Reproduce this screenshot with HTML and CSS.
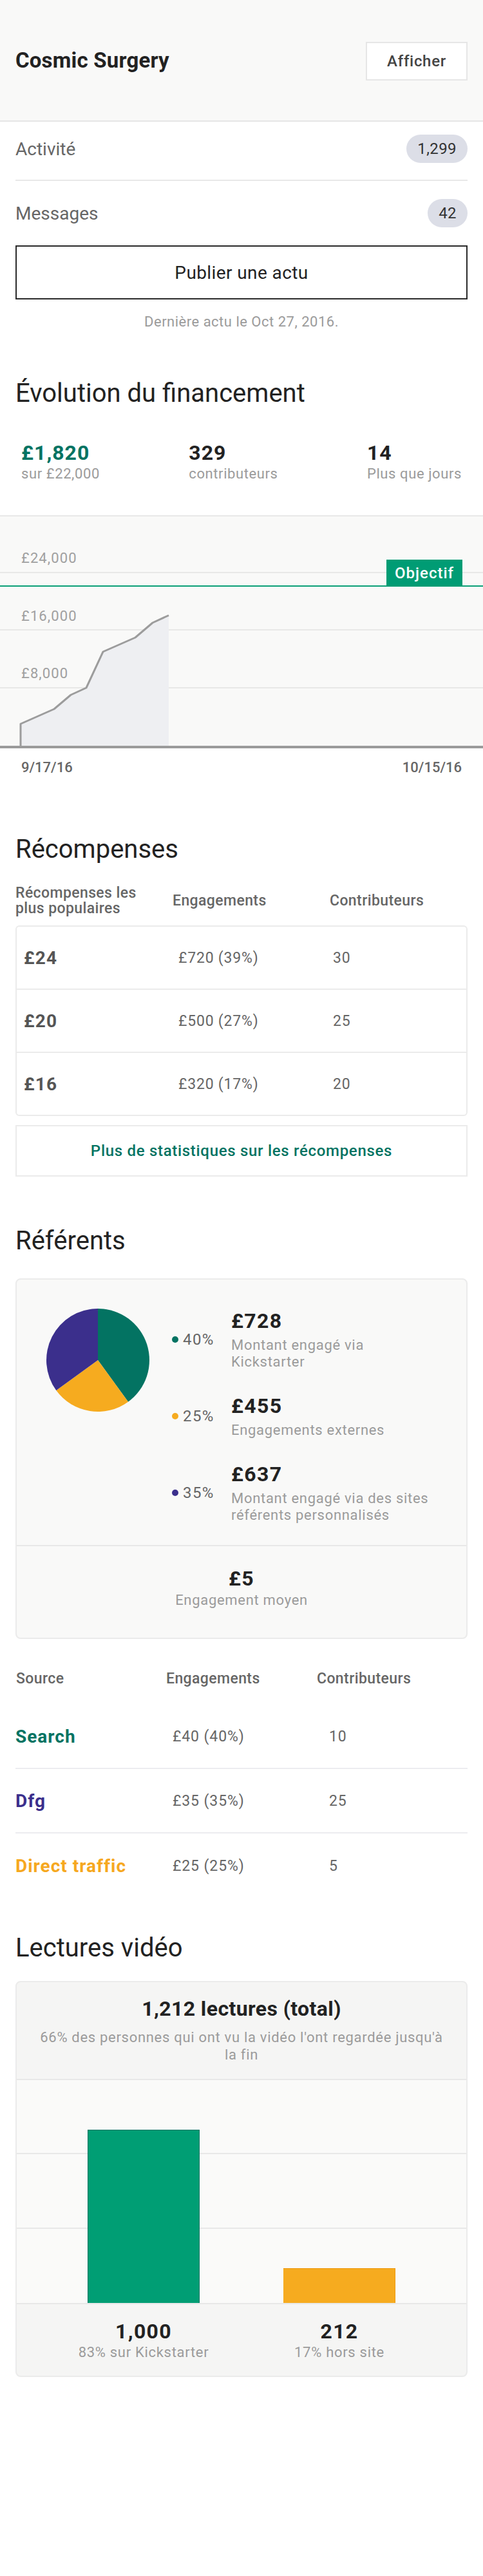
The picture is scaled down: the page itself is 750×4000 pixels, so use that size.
FILE: index.html
```html
<!DOCTYPE html>
<html lang="fr">
<head>
<meta charset="utf-8">
<title>Cosmic Surgery</title>
<link rel="stylesheet" href="styles.css">
</head>
<body>
<header class="top">
  <h1 class="top-title">Cosmic Surgery</h1>
  <button class="btn-view">Afficher</button>
</header>

<section class="pad">
  <div class="stat-row first">
    <span class="stat-label">Activité</span>
    <span class="badge">1,299</span>
  </div>
  <div class="stat-row second">
    <span class="stat-label">Messages</span>
    <span class="badge">42</span>
  </div>
  <button class="btn-publish">Publier une actu</button>
  <p class="last-update">Dernière actu le Oct 27, 2016.</p>
</section>

<section>
  <h2 class="section-title pad title-funding">Évolution du financement</h2>
  <div class="funding-stats">
    <div class="fstat">
      <div class="fstat-value green">£1,820</div>
      <div class="fstat-label">sur £22,000</div>
    </div>
    <div class="fstat">
      <div class="fstat-value">329</div>
      <div class="fstat-label">contributeurs</div>
    </div>
    <div class="fstat">
      <div class="fstat-value">14</div>
      <div class="fstat-label">Plus que jours</div>
    </div>
  </div>
  <svg class="funding-chart" viewBox="0 0 750 362" width="750" height="362">
    <rect x="0" y="0" width="750" height="360" fill="#f9f9f8"/>
    <rect x="0" y="0" width="750" height="2" fill="#e8e8e8"/>
    <rect x="0" y="88" width="750" height="2" fill="#e8e8e7"/>
    <rect x="0" y="177" width="750" height="2" fill="#e8e8e7"/>
    <rect x="0" y="267" width="750" height="2" fill="#e8e8e7"/>
    <text x="33" y="74" class="axis">£24,000</text>
    <text x="33" y="164" class="axis">£16,000</text>
    <text x="33" y="253" class="axis">£8,000</text>
    <polygon points="32,360 32,324 84,301 110,279 134,268 160,212 210,190 237,167 262,155.5 262,360" fill="#eeeff2"/>
    <polyline points="32,360 32,324 84,301 110,279 134,268 160,212 210,190 237,167 262,155.5" fill="none" stroke="#9c9c9c" stroke-width="3" stroke-linejoin="round"/>
    <rect x="0" y="109" width="750" height="2" fill="#0a9f77"/>
    <rect x="600" y="69" width="118" height="41" fill="#009c74"/>
    <text x="659" y="98" class="goal">Objectif</text>
    <rect x="0" y="358" width="750" height="4" fill="#9b9b9b"/>
  </svg>
  <div class="chart-dates">
    <span>9/17/16</span>
    <span>10/15/16</span>
  </div>
</section>

<section class="pad">
  <h2 class="section-title title-rewards">Récompenses</h2>
  <div class="rewards-head">
    <span>Récompenses les<br>plus populaires</span>
    <span>Engagements</span>
    <span>Contributeurs</span>
  </div>
  <div class="rewards-card">
    <div class="reward-row">
      <span class="reward-amount">£24</span>
      <span class="reward-val">£720 (39%)</span>
      <span class="reward-val">30</span>
    </div>
    <div class="reward-row">
      <span class="reward-amount">£20</span>
      <span class="reward-val">£500 (27%)</span>
      <span class="reward-val">25</span>
    </div>
    <div class="reward-row">
      <span class="reward-amount">£16</span>
      <span class="reward-val">£320 (17%)</span>
      <span class="reward-val">20</span>
    </div>
  </div>
  <button class="btn-more">Plus de statistiques sur les récompenses</button>
</section>

<section class="pad">
  <h2 class="section-title title-ref">Référents</h2>
  <div class="ref-card">
    <div class="ref-top">
      <svg class="pie" viewBox="0 0 160 160" width="160" height="160">
        <path d="M80 80 L80 0 A80 80 0 0 1 127.02 144.72 Z" fill="#037362"/>
        <path d="M80 80 L127.02 144.72 A80 80 0 0 1 15.28 127.02 Z" fill="#f6ab1f"/>
        <path d="M80 80 L15.28 127.02 A80 80 0 0 1 80 0 Z" fill="#3b2f8c"/>
      </svg>
      <div class="legend">
        <div class="legend-item">
          <div class="legend-pct"><span class="dot dot-green"></span>40%</div>
          <div class="legend-info">
            <div class="legend-amount">£728</div>
            <div class="legend-desc">Montant engagé via<br>Kickstarter</div>
          </div>
        </div>
        <div class="legend-item">
          <div class="legend-pct"><span class="dot dot-yellow"></span>25%</div>
          <div class="legend-info">
            <div class="legend-amount">£455</div>
            <div class="legend-desc">Engagements externes</div>
          </div>
        </div>
        <div class="legend-item">
          <div class="legend-pct"><span class="dot dot-purple"></span>35%</div>
          <div class="legend-info">
            <div class="legend-amount">£637</div>
            <div class="legend-desc">Montant engagé via des sites<br>référents personnalisés</div>
          </div>
        </div>
      </div>
    </div>
    <div class="ref-bottom">
      <div class="legend-amount">£5</div>
      <div class="avg-label">Engagement moyen</div>
    </div>
  </div>

  <div class="source-head">
    <span>Source</span>
    <span>Engagements</span>
    <span>Contributeurs</span>
  </div>
  <div class="source-row">
    <span class="source-name green">Search</span>
    <span class="source-val">£40 (40%)</span>
    <span class="source-val num">10</span>
  </div>
  <div class="source-row">
    <span class="source-name purple">Dfg</span>
    <span class="source-val">£35 (35%)</span>
    <span class="source-val num">25</span>
  </div>
  <div class="source-row last">
    <span class="source-name yellow">Direct traffic</span>
    <span class="source-val">£25 (25%)</span>
    <span class="source-val num">5</span>
  </div>
</section>

<section class="pad">
  <h2 class="section-title title-video">Lectures vidéo</h2>
  <div class="video-card">
    <div class="video-head">
      <div class="video-total">1,212 lectures (total)</div>
      <div class="video-sub">66% des personnes qui ont vu la vidéo l'ont regardée jusqu'à la fin</div>
    </div>
    <div class="video-chart">
      <div class="bar-col"><div class="bar bar-green" style="height:269px"></div></div>
      <div class="bar-col"><div class="bar bar-yellow" style="height:54px"></div></div>
    </div>
    <div class="video-foot">
      <div class="foot-col">
        <div class="legend-amount">1,000</div>
        <div class="foot-label">83% sur Kickstarter</div>
      </div>
      <div class="foot-col">
        <div class="legend-amount">212</div>
        <div class="foot-label">17% hors site</div>
      </div>
    </div>
  </div>
</section>
</body>
</html>
```

FILE: styles.css
```css
* { box-sizing: border-box; }
html, body { margin: 0; padding: 0; background: #fff; }
body {
  font-family: Roboto, "Liberation Sans", sans-serif;
  color: #222;
  width: 750px;
}
button { font-family: inherit; cursor: pointer; }
.pad { padding: 0 24px; }
.green { color: #037362; }
.purple { color: #3b2f8c; }
.yellow { color: #f6a81f; }

/* Header */
.top {
  height: 189px;
  background: #f9f9f8;
  border-bottom: 2px solid #e6e6e6;
  display: flex;
  align-items: center;
  justify-content: space-between;
  padding: 0 24px;
}
.top-title {
  margin: 0;
  font-size: 33px;
  font-weight: 700;
  color: #222;
  letter-spacing: 0.2px;
}
.btn-view {
  width: 158px;
  height: 60px;
  background: #fff;
  border: 2px solid #e6e6e6;
  font-size: 24px;
  font-weight: 500;
  color: #444;
  letter-spacing: 0.7px;
  margin-top: 2px;
}

/* Activity rows */
.stat-row {
  display: flex;
  align-items: center;
  justify-content: space-between;
}
.stat-row.first { padding: 20px 0 26px; border-bottom: 2px solid #e8e8e8; }
.stat-row.second { padding-top: 28px; }
.stat-label { font-size: 28px; color: #666; }
.badge {
  height: 44px;
  line-height: 44px;
  padding: 0 17px;
  border-radius: 22px;
  background: #dcdee7;
  color: #333;
  font-size: 24px;
  letter-spacing: 0.4px;
}
.btn-publish {
  display: block;
  width: 100%;
  height: 84px;
  margin-top: 28px;
  background: #fff;
  border: 2px solid #2a2a2a;
  font-size: 28px;
  letter-spacing: 0.4px;
  color: #222;
}
.last-update {
  margin: 22px 0 0;
  text-align: center;
  font-size: 22px;
  line-height: 26px;
  color: #9b9b9b;
  letter-spacing: 0.5px;
}

/* Section titles */
.section-title {
  margin: 0;
  font-size: 40px;
  line-height: 48px;
  font-weight: 400;
  color: #222;
}
.title-funding { margin-top: 74px; }
.title-rewards { margin-top: 89px; }
.title-ref { margin-top: 76px; }
.title-video { margin-top: 54px; }

/* Funding */
.funding-stats {
  margin-top: 49px;
  padding: 0 33px;
  display: flex;
  justify-content: space-between;
}
.fstat-value {
  font-size: 32px;
  line-height: 38px;
  font-weight: 700;
  color: #222;
  letter-spacing: 1px;
}
.fstat-value.green { color: #037362; }
.fstat-label {
  font-size: 22px;
  line-height: 28px;
  color: #9b9b9b;
  letter-spacing: 0.6px;
}
.funding-chart {
  display: block;
  margin-top: 50px;
}
.funding-chart .axis {
  font-family: Roboto, "Liberation Sans", sans-serif;
  font-size: 22px;
  fill: #a0a0a0;
  letter-spacing: 1.1px;
}
.funding-chart .goal {
  font-family: Roboto, "Liberation Sans", sans-serif;
  font-size: 24px;
  font-weight: 500;
  fill: #fff;
  text-anchor: middle;
  letter-spacing: 1px;
}
.chart-dates {
  margin-top: 16px;
  padding: 0 33px;
  display: flex;
  justify-content: space-between;
  font-size: 22px;
  line-height: 28px;
  font-weight: 500;
  color: #666;
}

/* Rewards */
.rewards-head {
  margin-top: 32px;
  display: grid;
  grid-template-columns: 244px 244px 1fr;
  align-items: center;
  font-size: 23px;
  line-height: 24px;
  font-weight: 500;
  color: #666;
  letter-spacing: 0.4px;
}
.rewards-card {
  margin-top: 14px;
  border: 2px solid #ebebeb;
  border-radius: 6px;
}
.reward-row {
  height: 98px;
  padding-left: 11px;
  display: grid;
  grid-template-columns: 240px 240px 1fr;
  align-items: center;
  border-bottom: 2px solid #ebebeb;
}
.reward-row:last-child { height: 96px; border-bottom: none; }
.reward-amount {
  font-size: 28px;
  font-weight: 700;
  color: #555;
  letter-spacing: 1.2px;
}
.reward-val {
  font-size: 23px;
  color: #666;
  letter-spacing: 0.8px;
}
.btn-more {
  display: block;
  width: 100%;
  height: 80px;
  margin-top: 14px;
  background: #fff;
  border: 2px solid #ebebeb;
  font-size: 24px;
  font-weight: 500;
  color: #037362;
  letter-spacing: 0.7px;
}

/* Referrers */
.ref-card {
  margin-top: 34px;
  background: #f9f9f8;
  border: 2px solid #ebebeb;
  border-radius: 8px;
}
.ref-top {
  display: flex;
  align-items: flex-start;
  padding: 45px 20px 33px 46px;
  border-bottom: 2px solid #e8e8e8;
}
.pie { display: block; flex: none; }
.legend {
  margin-left: 35px;
  display: flex;
  flex-direction: column;
  gap: 36px;
}
.legend-item {
  display: flex;
  align-items: center;
}
.legend-pct {
  width: 92px;
  flex: none;
  display: flex;
  align-items: center;
  font-size: 24px;
  color: #666;
  letter-spacing: 1.4px;
}
.dot {
  width: 10px;
  height: 10px;
  border-radius: 50%;
  margin-right: 7px;
}
.dot-green { background: #037362; }
.dot-yellow { background: #f6ab1f; }
.dot-purple { background: #3b2f8c; }
.legend-amount {
  font-size: 32px;
  line-height: 38px;
  font-weight: 700;
  color: #222;
  letter-spacing: 1.3px;
}
.legend-desc {
  margin-top: 6px;
  font-size: 22px;
  line-height: 26px;
  color: #9b9b9b;
  letter-spacing: 0.7px;
}
.ref-bottom {
  padding: 31px 0 45px;
  text-align: center;
}
.avg-label {
  margin-top: 2px;
  font-size: 22px;
  line-height: 26px;
  color: #9b9b9b;
  letter-spacing: 0.7px;
}

/* Sources */
.source-head {
  margin-top: 49px;
  display: grid;
  grid-template-columns: 234px 234px 1fr;
  font-size: 23px;
  line-height: 26px;
  font-weight: 500;
  color: #666;
  letter-spacing: 0.4px;
}
.source-head span:first-child { padding-left: 1px; }
.source-row {
  height: 100px;
  display: grid;
  grid-template-columns: 244px 243px 1fr;
  align-items: center;
  border-bottom: 2px solid #ececf0;
}
.source-head + .source-row { margin-top: 27px; }
.source-row.last { height: 100px; border-bottom: none; }
.source-name {
  font-size: 28px;
  font-weight: 700;
  letter-spacing: 1px;
}
.source-val {
  font-size: 23px;
  color: #666;
  letter-spacing: 0.9px;
}

/* Video */
.video-card {
  margin-top: 27px;
  border: 2px solid #ebebeb;
  border-radius: 8px;
  background: #f5f5f4;
  overflow: hidden;
}
.video-head {
  padding: 22px 28px 24px;
  text-align: center;
  border-bottom: 2px solid #e8e8e8;
}
.video-total {
  font-size: 32px;
  line-height: 38px;
  font-weight: 700;
  color: #222;
  letter-spacing: 0.4px;
}
.video-sub {
  margin-top: 12px;
  font-size: 22px;
  line-height: 27px;
  color: #9b9b9b;
  letter-spacing: 0.7px;
}
.video-chart {
  height: 348px;
  padding: 0 45px;
  display: flex;
  align-items: flex-end;
  background-color: #fafaf9;
  background-image:
    linear-gradient(#e8e8e8, #e8e8e8),
    linear-gradient(#e8e8e8, #e8e8e8);
  background-size: 100% 2px, 100% 2px;
  background-position: 0 113px, 0 229px;
  background-repeat: no-repeat;
  border-bottom: 2px solid #e8e8e8;
}
.bar-col {
  flex: 1;
  display: flex;
  justify-content: center;
  align-items: flex-end;
}
.bar { width: 174px; }
.bar-green { background: #009e74; border: 1px solid #037362; border-bottom: none; }
.bar-yellow { background: #f6ab1f; border: 1px solid #ef9a12; border-bottom: none; border-left: none; }
.video-foot {
  display: flex;
  padding: 23px 45px 23px;
}
.foot-col {
  flex: 1;
  text-align: center;
}
.foot-label {
  margin-top: 1px;
  font-size: 22px;
  line-height: 26px;
  color: #9b9b9b;
  letter-spacing: 0.7px;
}
```
